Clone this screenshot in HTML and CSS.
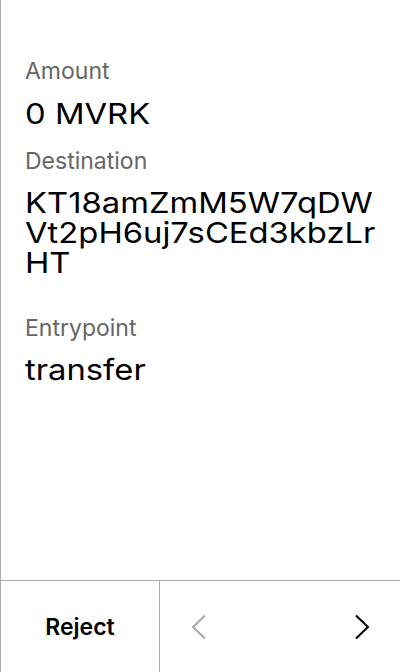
FILE: index.html
```html
<!DOCTYPE html>
<html lang="en">
<head>
<meta charset="utf-8">
<title>Review operation</title>
<link rel="stylesheet" href="styles.css">
</head>
<body>
<div class="app">
  <main class="content">
    <div class="field">
      <div class="label">Amount</div>
      <div class="value"><span class="value-text">0 MVRK</span></div>
    </div>
    <div class="field field-address">
      <div class="label">Destination</div>
      <div class="value address"><span class="value-text">KT18amZmM5W7qDWVt2pH6uj7sCEd3kbzLrHT</span></div>
    </div>
    <div class="field">
      <div class="label">Entrypoint</div>
      <div class="value"><span class="value-text">transfer</span></div>
    </div>
  </main>
  <footer class="footer">
    <button class="reject">Reject</button>
    <div class="nav">
      <svg class="chev chev-prev" width="16" height="26" viewBox="0 0 16 26"><path d="M14 1.5 L2 13 L14 24.5" fill="none" stroke="currentColor" stroke-width="2"/></svg>
      <svg class="chev chev-next" width="16" height="26" viewBox="0 0 16 26"><path d="M2 1.5 L14 13 L2 24.5" fill="none" stroke="currentColor" stroke-width="2"/></svg>
    </div>
  </footer>
</div>
</body>
</html>
```
FILE: styles.css
```css
* { box-sizing: border-box; }
html, body { margin: 0; padding: 0; background: #fff; }
body {
  font-family: Inter, "Noto Sans", sans-serif;
  color: #000;
}
.app {
  height: 672px;
  display: flex;
  flex-direction: column;
  border-left: 1px solid #ababab;
}
.content {
  flex: 1;
  padding: 58px 16px 0 24px;
  display: flex;
  flex-direction: column;
}
.field { margin-bottom: 19px; }
.field-address { margin-bottom: 36.5px; }
.label {
  font-size: 23px;
  line-height: 26px;
  color: #666;
}
.value {
  font-size: 29px;
  line-height: 30px;
  margin-top: 14.5px;
  color: #000;
}
.value-text {
  display: inline-block;
  transform: scaleX(1.13);
  transform-origin: 0 0;
  white-space: nowrap;
}
.address .value-text {
  width: 324px;
  white-space: normal;
  word-break: break-all;
}
.footer {
  height: 92px;
  border-top: 1px solid #ababab;
  display: flex;
}
.reject {
  width: 159px;
  border: none;
  border-right: 1px solid #ababab;
  background: #fff;
  font-family: inherit;
  font-size: 23px;
  font-weight: 600;
  color: #000;
  padding: 0;
}
.nav {
  flex: 1;
  display: flex;
  align-items: center;
  justify-content: space-between;
  padding: 0 30px 0 31px;
}
.chev-prev { color: #a8a8a8; }
.chev-next { color: #000; }
```
